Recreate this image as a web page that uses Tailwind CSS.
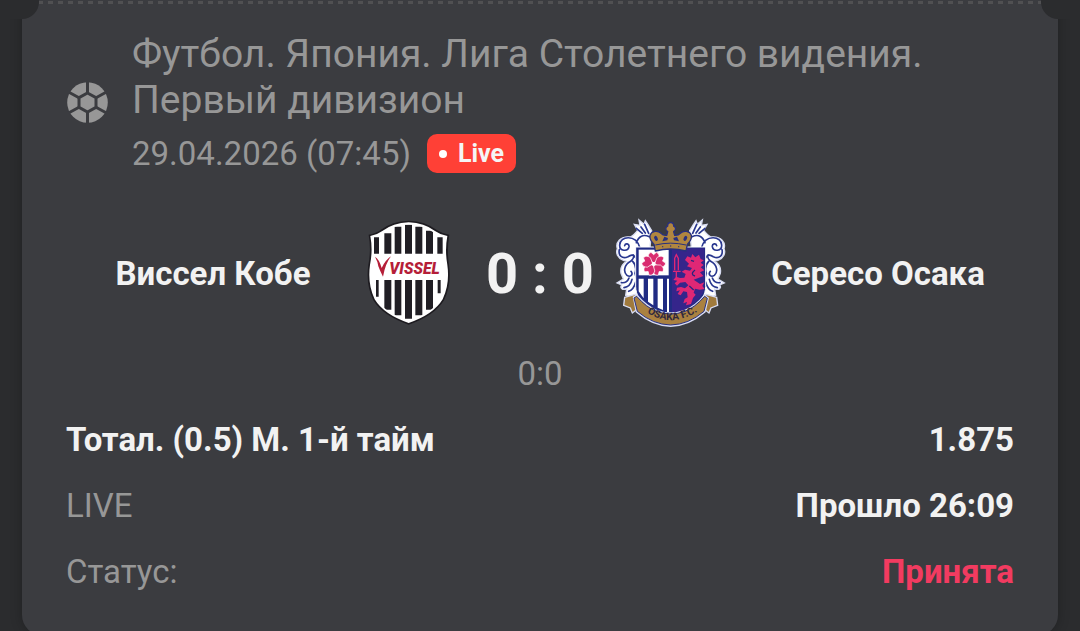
<!DOCTYPE html>
<html lang="ru">
<head>
<meta charset="utf-8">
<meta name="viewport" content="width=device-width, initial-scale=1">
<title>Виссел Кобе — Сересо Осака</title>
<script src="https://cdn.jsdelivr.net/npm/@tailwindcss/browser@4"></script>
</head>
<body class="max-h-screen overflow-hidden bg-[#2b2c2e] font-[Roboto,sans-serif] text-[#979797]">
<main class="px-[22px]">
  <article class="relative rounded-b-[20px] bg-[#3b3c40] px-11 pt-[31px] pb-11 shadow-[0_0_12px_rgba(0,0,0,0.25)]">
    <!-- ticket perforation and side notches -->
    <svg class="absolute inset-x-[17px] top-px h-[3px] w-[calc(100%-34px)]" aria-hidden="true"><line x1="0" y1="1.5" x2="100%" y2="1.5" stroke="#505052" stroke-width="3" stroke-dasharray="5 5" stroke-dashoffset="1"/></svg>
    <span class="absolute -top-4 -left-[22px] h-[35px] w-[39px] rounded-br-[17px] bg-[#2b2c2e]"></span>
    <span class="absolute -top-4 -right-[22px] h-[35px] w-[39px] rounded-bl-[17px] bg-[#2b2c2e]"></span>

    <header class="flex items-center gap-6">
      <svg class="size-[42px] shrink-0" viewBox="0 0 42 42" aria-hidden="true">
        <circle cx="21.500" cy="21.500" r="20.300" fill="#979797"/>
        <g stroke="#3b3c40" stroke-width="3" fill="none" transform="translate(.5 .5)">
          <path d="M21 11.500 29.500 16.200V25.800L21 30.500 12.500 25.800V16.200Z"/>
          <path d="M21 12V0M29.500 16.200 40 10.500M29.500 25.800 40 31.500M21 30V42M12.500 25.800 2 31.500M12.500 16.200 2 10.500"/>
        </g>
      </svg>
      <div>
        <h1 class="text-[39px] leading-[46px]">Футбол. Япония. Лига Столетнего видения. Первый дивизион</h1>
        <div class="mt-[11px] flex items-center gap-4">
          <time class="text-[33px] leading-[39px]" datetime="2026-04-29T07:45">29.04.2026 (07:45)</time>
          <span class="flex h-[39px] items-center gap-[11px] rounded-[10px] bg-[#ff4036] px-3 text-[25px] font-bold text-[#f5f5f5]"><i class="size-2 rounded-full bg-white"></i>Live</span>
        </div>
      </div>
    </header>

    <section class="mt-[46px] grid grid-cols-[minmax(0,1fr)_auto_auto_auto_minmax(0,1fr)] items-center">
      <h2 class="pl-1.5 text-center text-[33px] leading-[38px] font-bold text-[#f2f2f2]">Виссел Кобе</h2>
      <svg class="size-[110px]" viewBox="-18 27 330 330" role="img" aria-label="Виссел Кобе">
        <defs><clipPath id="shield"><path d="M146 43Q190 45 222 68Q237 78 257 82Q249 120 258 165Q265 220 243 266Q216 309 146 333Q76 309 49 266Q27 220 36 165Q45 120 37 82Q55 78 70 68Q102 45 146 43Z"/></clipPath></defs>
        <path d="M146 32Q196 34 229 59Q245 70 268 74Q260 120 267 165Q275 224 252 271Q223 318 146 344Q69 318 40 271Q17 224 25 165Q34 120 26 74Q49 70 63 59Q96 34 146 32Z" fill="#1d1b20"/>
        <path d="M146 37Q193 39 225 63Q240 74 262 78Q254 120 262 165Q270 222 248 268Q220 314 146 339Q72 314 44 268Q22 222 30 165Q39 120 31 78Q52 74 67 63Q99 39 146 37Z" fill="#fff"/>
        <g clip-path="url(#shield)" fill="#201e24">
          <path d="M42 82H57V131H42ZM73 70H94V131H73ZM104 50H124V131H104ZM135 44H156V131H135ZM166 50H187V131H166ZM198 62H219V131H198ZM232 82H248V131H232Z"/>
          <path d="M48 210H56V260H48ZM73 210H94V299H73ZM104 210H124V316H104ZM135 210H156V326H135ZM166 210H187V316H166ZM198 210H219V299H198ZM233 210H242V250H233Z"/>
        </g>
        <path d="M45 140Q58 148 65 174Q76 150 93 139Q76 161 69 200Q60 183 55 169Q53 154 45 140Z" fill="#b51e38"/>
        <text x="88" y="191" font-family="Roboto, sans-serif" font-size="47" font-weight="900" font-style="italic" fill="#b51e38">VISSEL</text>
      </svg>
      <p class="w-[152px] text-center text-[56px] leading-[64px] font-bold whitespace-nowrap text-[#f2f2f2]">0 : 0</p>
      <svg class="size-[110px] overflow-visible" viewBox="33 27 330 330" role="img" aria-label="Сересо Осака">
        <defs>
          <path id="motto" d="M108 295Q196 367 296 292"/>
          <g id="scroll">
            <path d="M140 62L129 44 121 32 117 43 102 30 105 46 88 43 98 61Q85 77 76 81C45 77 31 99 37 116C31 129 39 146 55 151L65 154Q44 166 48 190L55 207 36 219 50 225Q44 233 53 238L65 237 62 256 100 270V115L135 112Z" fill="#fff" stroke="#d8dcf2" stroke-width="4"/>
            <path d="M104 112C92 72 45 78 44 105C43 124 69 126 72 110C73 100 61 99 59 107M43 119C39 137 52 148 69 140C89 128 91 141 77 154C57 165 54 185 66 196C76 203 86 194 78 184M94 98Q105 68 133 80M108 51L121 69M119 43L131 70M94 55L112 70M49 218Q66 220 72 204M57 233Q76 230 81 208M71 244Q86 239 92 216M83 154Q97 169 90 190L98 218M85 135L97 149" fill="none" stroke="#29378f" stroke-width="5" stroke-linecap="round"/>
          </g>
        </defs>
        <use href="#scroll"/>
        <use href="#scroll" transform="matrix(-1 0 0 1 394 0)"/>
        <path d="M92 111H302V230C301 277 255 304 197 332C139 304 93 277 92 230Z" fill="#202b83" stroke="#fff" stroke-width="3"/>
        <path d="M101 119H191V196H101Z" fill="#fff"/>
        <path d="M101 206H116V265L101 244ZM129 206H145V286L129 275ZM158 206H174V300L158 293ZM186 206H192V306H186Z" fill="#fff"/>
        <path d="M201 115H298V230Q295 275 201 321Z" fill="#35258b"/>
        <!-- cherry blossom -->
        <g fill="#d92b70" stroke="#fff" stroke-width="2">
          <path id="petal" d="M146 159L131 147C128 138 130 130 138 127L146 134 154 127C162 130 164 138 161 147Z"/>
          <use href="#petal" transform="rotate(72 146 162)"/><use href="#petal" transform="rotate(144 146 162)"/><use href="#petal" transform="rotate(216 146 162)"/><use href="#petal" transform="rotate(288 146 162)"/>
        </g>
        <circle cx="146" cy="162" r="6" fill="#fff"/>
        <!-- lion with sword -->
        <path fill="#df2775" d="M240 150L247 139 258 143 262 132 271 142 282 134 287 147 296 151 287 158 296 165 287 172 298 181 285 187 295 198 280 204 266 209 285 222 298 217 292 228 299 237 284 239 270 236 266 248 272 254 264 264 258 282 243 286 246 276 235 280 239 267 248 262 246 246 235 244 227 256 218 252 225 241 214 244 216 233 228 231 240 235 250 226 241 216 225 218 216 227 209 220 217 212 205 210 213 200 225 204 238 203 242 192 230 185 240 179 255 182 261 174 246 169 252 161Z"/>
        <path d="M209 181V145L214 134 220 145V181M204 184H227M214 184V201" fill="none" stroke="#df2775" stroke-width="4"/>
        <path d="M258 151L267 154M270 180Q254 193 270 198M253 228L266 240" stroke="#28247e" stroke-width="4" fill="none"/>
        <!-- crown -->
        <path d="M135 76C140 62 159 61 168 70Q174 77 185 76L188 65C179 59 182 50 188 48C188 34 206 34 206 48C212 50 215 59 206 65L209 76Q220 77 226 70C235 61 254 62 259 76C262 90 251 97 247 103L243 123Q197 111 151 123L147 103C143 97 132 90 135 76Z" fill="#b08640" stroke="#28307e" stroke-width="4"/>
        <path d="M151 105Q197 94 243 105" fill="none" stroke="#28307e" stroke-width="3"/>
        <g fill="#28307e"><ellipse cx="153" cy="85" rx="5" ry="8" transform="rotate(-25 153 85)"/><ellipse cx="241" cy="85" rx="5" ry="8" transform="rotate(25 241 85)"/><path d="M172 94L178 80 189 84 187 91ZM222 94L216 80 205 84 207 91Z"/><circle cx="173" cy="110" r="2"/><circle cx="197" cy="108" r="2"/><circle cx="221" cy="110" r="2"/></g>
        <!-- ribbon -->
        <path d="M59 262L91 253 105 291 82 309 76 294 56 286ZM335 262L303 253 289 291 312 309 318 294 338 286Z" fill="#a07a3c" stroke="#d8dcf2" stroke-width="4"/>
        <path d="M83 260L96 253Q127 288 155 299Q196 315 239 299Q270 288 298 253L312 263 302 307Q252 350 197 351Q142 350 92 307Z" fill="#d8dcf2"/>
        <path d="M87 264L95 259Q125 293 154 304Q196 320 240 304Q269 293 299 259L307 265 297 304Q250 344 197 345Q144 344 97 304Z" fill="#aa8140" stroke="#28307e" stroke-width="3"/>
        <text font-family="Roboto, sans-serif" font-size="31" font-weight="700" fill="#30283d"><textPath href="#motto" startOffset="50%" text-anchor="middle">OSAKA F.C.</textPath></text>
      </svg>
      <h2 class="pl-4 text-center text-[33px] leading-[38px] font-bold text-[#f2f2f2]">Сересо Осака</h2>
    </section>

    <p class="mt-[26px] text-center text-[33px] leading-[38px]">0:0</p>

    <dl class="mt-7 space-y-7 text-[33px] leading-[38px]">
      <div class="flex justify-between"><dt class="font-bold text-[#f2f2f2]">Тотал. (0.5) М. 1-й тайм</dt><dd class="font-bold text-[#f2f2f2]">1.875</dd></div>
      <div class="flex justify-between"><dt>LIVE</dt><dd class="font-bold text-[#f2f2f2]">Прошло 26:09</dd></div>
      <div class="flex justify-between"><dt>Статус:</dt><dd class="font-bold text-[#f23b60]">Принята</dd></div>
    </dl>
  </article>
</main>
</body>
</html>
